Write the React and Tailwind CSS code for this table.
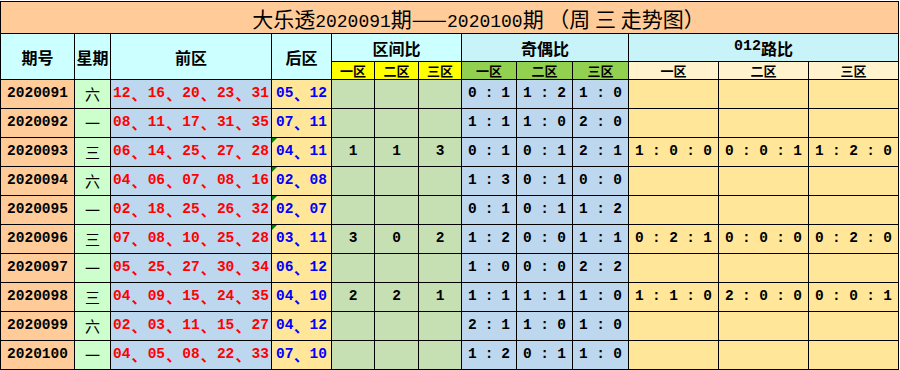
import clsx from 'clsx';

const ROWS = [
  { id: '2020091', wk: '六', front: ['12', '16', '20', '23', '31'], back: ['05', '12'], zone: null, odd: ['0:1', '1:2', '1:0'], road: null },
  { id: '2020092', wk: '一', front: ['08', '11', '17', '31', '35'], back: ['07', '11'], zone: null, odd: ['1:1', '1:0', '2:0'], road: null },
  { id: '2020093', wk: '三', front: ['06', '14', '25', '27', '28'], back: ['04', '11'], zone: ['1', '1', '3'], odd: ['0:1', '0:1', '2:1'], road: ['1:0:0', '0:0:1', '1:2:0'], flag: true },
  { id: '2020094', wk: '六', front: ['04', '06', '07', '08', '16'], back: ['02', '08'], zone: null, odd: ['1:3', '0:1', '0:0'], road: null, flag: true },
  { id: '2020095', wk: '一', front: ['02', '18', '25', '26', '32'], back: ['02', '07'], zone: null, odd: ['0:1', '0:1', '1:2'], road: null, flag: true },
  { id: '2020096', wk: '三', front: ['07', '08', '10', '25', '28'], back: ['03', '11'], zone: ['3', '0', '2'], odd: ['1:2', '0:0', '1:1'], road: ['0:2:1', '0:0:0', '0:2:0'], flag: true },
  { id: '2020097', wk: '一', front: ['05', '25', '27', '30', '34'], back: ['06', '12'], zone: null, odd: ['1:0', '0:0', '2:2'], road: null },
  { id: '2020098', wk: '三', front: ['04', '09', '15', '24', '35'], back: ['04', '10'], zone: ['2', '2', '1'], odd: ['1:1', '1:1', '1:0'], road: ['1:1:0', '2:0:0', '0:0:1'] },
  { id: '2020099', wk: '六', front: ['02', '03', '11', '15', '27'], back: ['04', '12'], zone: null, odd: ['2:1', '1:0', '1:0'], road: null },
  { id: '2020100', wk: '一', front: ['04', '05', '08', '22', '33'], back: ['07', '10'], zone: null, odd: ['1:2', '0:1', '1:0'], road: null },
];

function Cell({ className, children }) {
  return (
    <div className={clsx('relative flex items-center justify-center overflow-hidden', className)}>
      {children}
    </div>
  );
}

// numbers joined by 、 spread across the cell
function Nums({ list }) {
  const parts = [];
  list.forEach((n, i) => {
    if (i > 0) parts.push(<span key={'s' + i} className="font-['Noto_Sans_CJK_SC',sans-serif] text-[15px] font-bold">、</span>);
    parts.push(<span key={n + i}>{n}</span>);
  });
  return <div className="flex w-full items-center justify-between px-[2px]">{parts}</div>;
}

function Ratio({ value }) {
  const bits = value.split(':');
  const parts = [];
  bits.forEach((b, i) => {
    if (i > 0) parts.push(<span key={'c' + i}>:</span>);
    parts.push(<span key={'d' + i}>{b}</span>);
  });
  return <div className="flex w-full items-center justify-between px-[6px]">{parts}</div>;
}

export default function App() {
  const head = "font-['Noto_Sans_CJK_SC',sans-serif] text-[16px] font-bold";
  const sub = "font-['Noto_Sans_CJK_SC',sans-serif] text-[13px] font-bold leading-[17px]";

  return (
    <div className="h-[370px] w-[900px] bg-white pt-px text-black">
      <div className="grid w-fit grid-cols-[73px_35px_160px_59px_42px_43px_42px_54px_55px_55px_89px_89px_89px] grid-rows-[31px_27px_17px_repeat(10,28px)] gap-px bg-black p-px font-['Liberation_Mono','Noto_Sans_CJK_SC',monospace] text-[14.5px] font-bold">
        {/* Title */}
        <Cell className="col-span-13 bg-[#ffcc99] pl-[58px] pt-[3px]">
          <span className="font-['Noto_Sans_CJK_SC',sans-serif] text-[21px] font-normal">
            大乐透<span className="font-['Liberation_Mono',monospace] text-[18px]">2020091</span>期——<span className="font-['Liberation_Mono',monospace] text-[18px]">2020100</span>期 （周 三 走势图）
          </span>
        </Cell>

        {/* Header */}
        <Cell className={clsx('row-span-2 bg-[#ccffff]', head)}>期号</Cell>
        <Cell className={clsx('row-span-2 bg-[#ccffff]', head)}>星期</Cell>
        <Cell className={clsx('row-span-2 bg-[#ccffff]', head)}>前区</Cell>
        <Cell className={clsx('row-span-2 bg-[#ccffff]', head)}>后区</Cell>
        <Cell className={clsx('col-span-3 bg-[#ccffff]', head)}>区间比</Cell>
        <Cell className={clsx('col-span-3 bg-[#c8f3f8]', head)}>奇偶比</Cell>
        <Cell className={clsx('col-span-3 bg-[#c8f3f8]', head)}>
          <span className="font-['Liberation_Mono',monospace] text-[15px]">012</span>路比
        </Cell>

        {['一区', '二区', '三区'].map(t => (
          <Cell key={'y' + t} className={clsx('bg-[#ffff00]', sub)}>{t}</Cell>
        ))}
        {['一区', '二区', '三区'].map(t => (
          <Cell key={'g' + t} className={clsx('bg-[#92d050]', sub)}>{t}</Cell>
        ))}
        {['一区', '二区', '三区'].map(t => (
          <Cell key={'c' + t} className={clsx('bg-[#fff2cc]', sub)}>{t}</Cell>
        ))}

        {/* Data rows */}
        {ROWS.map(r => (
          <div key={r.id} className="contents">
            <Cell className="bg-[#ffcc99]">{r.id}</Cell>
            <Cell className="bg-[#ccffcc] font-['Noto_Sans_CJK_SC',sans-serif] text-[15px] font-normal">{r.wk}</Cell>
            <Cell className="bg-[#bdd7ee] text-[#ff0000]">
              <Nums list={r.front} />
            </Cell>
            <Cell className="bg-[#ffe699] text-[#0000ff]">
              {r.flag && (
                <span className="absolute left-0 top-0 h-0 w-0 border-r-[5px] border-t-[5px] border-r-transparent border-t-[#008000]" />
              )}
              <div className="w-full px-[2px]">
                <Nums list={r.back} />
              </div>
            </Cell>
            {[0, 1, 2].map(i => (
              <Cell key={'z' + i} className="bg-[#c6e0b4]">{r.zone ? r.zone[i] : ''}</Cell>
            ))}
            {r.odd.map((v, i) => (
              <Cell key={'o' + i} className="bg-[#bdd7ee]">
                <Ratio value={v} />
              </Cell>
            ))}
            {[0, 1, 2].map(i => (
              <Cell key={'r' + i} className="bg-[#ffe699]">
                {r.road ? <Ratio value={r.road[i]} /> : null}
              </Cell>
            ))}
          </div>
        ))}
      </div>
    </div>
  );
}
